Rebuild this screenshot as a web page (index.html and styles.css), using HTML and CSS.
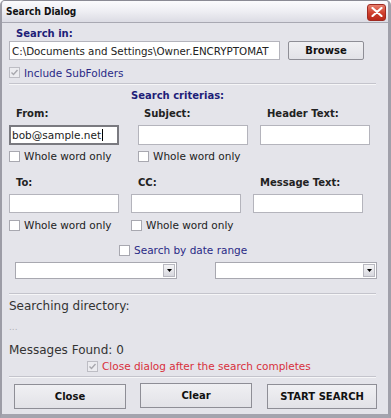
FILE: index.html
```html
<!DOCTYPE html>
<html>
<head>
<meta charset="utf-8">
<link rel="stylesheet" href="styles.css">
</head>
<body>
<div class="window">
  <div class="titlebar">
    <span class="title">Search Dialog</span>
    <span class="close-x"><svg width="12" height="10" viewBox="0 0 12 10"><path d="M1.5 1 L10.5 9 M10.5 1 L1.5 9" stroke="#fff" stroke-width="2.2" stroke-linecap="round"/></svg></span>
  </div>
  <div class="content">
    <div class="row r-searchin"><span class="navy-bold">Search in:</span></div>
    <div class="row r-path">
      <div class="input path-input">C:\Documents and Settings\Owner.ENCRYPTOMAT</div>
      <div class="btn browse">Browse</div>
    </div>
    <div class="row r-include">
      <span class="cb checked disabled"><svg width="9" height="9" viewBox="0 0 9 9"><path d="M1.5 4.5 L3.5 6.5 L7.5 2" stroke="#a8a8ae" stroke-width="1.4" fill="none"/></svg></span>
      <span class="navy">Include SubFolders</span>
    </div>
    <div class="sep s1"></div>
    <div class="row r-criteria"><span class="navy-bold">Search criterias:</span></div>
    <div class="row r-labels1">
      <span class="lbl l-from">From:</span>
      <span class="lbl l-subject">Subject:</span>
      <span class="lbl l-header">Header Text:</span>
    </div>
    <div class="row r-inputs1">
      <div class="input field focused">bob@sample.net<span class="caret"></span></div>
      <div class="input field i-subject"></div>
      <div class="input field i-header"></div>
    </div>
    <div class="row r-ww1">
      <span class="opt"><span class="cb"></span><span class="txt">Whole word only</span></span>
      <span class="opt o-subject"><span class="cb"></span><span class="txt">Whole word only</span></span>
    </div>
    <div class="row r-labels2">
      <span class="lbl l-to">To:</span>
      <span class="lbl l-cc">CC:</span>
      <span class="lbl l-msg">Message Text:</span>
    </div>
    <div class="row r-inputs2">
      <div class="input field"></div>
      <div class="input field i-cc"></div>
      <div class="input field i-msg"></div>
    </div>
    <div class="row r-ww2">
      <span class="opt"><span class="cb"></span><span class="txt">Whole word only</span></span>
      <span class="opt o-cc"><span class="cb"></span><span class="txt">Whole word only</span></span>
    </div>
    <div class="row r-date">
      <span class="cb"></span><span class="navy">Search by date range</span>
    </div>
    <div class="row r-drops">
      <div class="select"><span class="arrow"><svg width="5" height="3" viewBox="0 0 5 3"><path d="M0 0 H5 L2.5 3 Z" fill="#000"/></svg></span></div>
      <div class="select s-right"><span class="arrow"><svg width="5" height="3" viewBox="0 0 5 3"><path d="M0 0 H5 L2.5 3 Z" fill="#000"/></svg></span></div>
    </div>
    <div class="sep s2"></div>
    <div class="row r-dir">Searching directory:</div>
    <div class="row r-dots">...</div>
    <div class="row r-found">Messages Found: 0</div>
    <div class="row r-closeopt">
      <span class="cb checked disabled"><svg width="9" height="9" viewBox="0 0 9 9"><path d="M1.5 4.5 L3.5 6.5 L7.5 2" stroke="#a8a8ae" stroke-width="1.4" fill="none"/></svg></span>
      <span class="red">Close dialog after the search completes</span>
    </div>
    <div class="sep s3"></div>
    <div class="row r-buttons">
      <div class="btn big b-close">Close</div>
      <div class="btn big b-clear">Clear</div>
      <div class="btn big b-start">START SEARCH</div>
    </div>
  </div>
</div>
</body>
</html>
```

FILE: styles.css
```css
* { box-sizing: border-box; }
html, body { margin: 0; padding: 0; background: #ffffff; }
body { font-family: "DejaVu Sans", Verdana, sans-serif; font-size: 10.5px; color: #222; }

.window {
  width: 391px;
  height: 418px;
  background: #e4e4ea;
  border: 1px solid #8a8a94;
  border-bottom: 4px solid #a4a4ae;
  border-left: 2px solid #9c9ca6;
  border-right: 3px solid #a0a0aa;
  border-radius: 5px 5px 0 0;
  overflow: hidden;
}

.titlebar {
  height: 22px;
  display: flex;
  align-items: center;
  justify-content: space-between;
  padding: 0 2px 0 4px;
  background: linear-gradient(#fbfbfd, #eeeef3 50%, #dcdce4);
  border-bottom: 1px solid #a8a8b2;
}
.title {
  font-family: "DejaVu Sans Condensed", "DejaVu Sans", sans-serif;
  font-weight: bold;
  font-size: 10px;
  color: #111;
}
.close-x {
  width: 19px;
  height: 17px;
  margin-top: 1px;
  border-radius: 3px;
  background: linear-gradient(#e8806e, #cf3e2c 55%, #b8281a);
  border: 1px solid #a02a22;
  display: flex;
  align-items: center;
  justify-content: center;
}

.content { padding-left: 7px; }
.row { display: flex; align-items: center; }

.navy-bold { color: #1e1e78; font-weight: bold; font-size: 10px; }
.navy { color: #2a2a86; }
.red { color: #d8303c; }
.lbl { font-weight: bold; font-size: 10px; color: #222; }

.r-searchin { margin-top: 4px; height: 12px; padding-left: 7px; }
.r-path { margin-top: 2px; height: 19px; }
.input {
  background: #fff;
  border: 1px solid #b4b4bc;
  height: 100%;
  display: flex;
  align-items: center;
  padding-left: 2px;
  color: #222;
  white-space: nowrap;
  overflow: hidden;
}
.path-input { width: 271px; font-size: 10.3px; }
.btn {
  display: flex;
  align-items: center;
  justify-content: center;
  background: linear-gradient(#f0f0f3, #e2e2e7);
  border: 1px solid #8e8e96;
  font-weight: bold;
  color: #111;
}
.browse { margin-left: 8px; width: 76px; height: 19px; border-radius: 2px; font-size: 10px; }

.cb {
  width: 11px;
  height: 11px;
  background: #fff;
  border: 1px solid #a8a8b0;
  flex: none;
  display: inline-flex;
  align-items: center;
  justify-content: center;
}
.cb.disabled { background: #ececf0; border-color: #bdbdc4; }

.r-include { margin-top: 6px; height: 13px; }
.r-include .cb { margin-right: 4px; }

.sep {
  height: 2px;
  width: 367px;
  border-top: 1px solid #c4c4cc;
  border-bottom: 1px solid #f6f6f8;
}
.s1 { margin-top: 4px; }
.r-criteria { margin-top: 4px; height: 12px; padding-left: 122px; }

.r-labels1 { margin-top: 6px; height: 12px; }
.l-from { margin-left: 7px; width: 128px; }
.l-subject { width: 123px; }

.r-inputs1 { margin-top: 6px; height: 20px; }
.field { width: 110px; }
.i-subject { margin-left: 19px; }
.i-header { margin-left: 12px; }
.focused { border: 2px solid #7a7a80; padding-left: 1px; }
.caret { display: inline-block; width: 1px; height: 12px; background: #000; margin-left: 1px; }

.opt { display: flex; align-items: center; }
.opt .cb { margin-right: 4px; }
.r-ww1 { margin-top: 5px; height: 12px; }
.r-ww1 .opt { width: 129px; }

.r-labels2 { margin-top: 14px; height: 12px; }
.l-to { margin-left: 7px; width: 122px; }
.l-cc { width: 122px; }

.r-inputs2 { margin-top: 6px; height: 19px; }
.i-cc { margin-left: 12px; }
.i-msg { margin-left: 12px; }

.r-ww2 { margin-top: 6px; height: 12px; }
.r-ww2 .opt { width: 122px; }

.r-date { margin-top: 13px; height: 12px; padding-left: 110px; }
.r-date .cb { margin-right: 4px; }

.r-drops { margin-top: 6px; height: 17px; padding-left: 6px; }
.select {
  width: 162px;
  height: 17px;
  background: #fff;
  border: 1px solid #a8a8b0;
  display: flex;
  justify-content: flex-end;
  padding: 1px;
}
.s-right { margin-left: 38px; }
.arrow {
  width: 12px;
  height: 13px;
  background: linear-gradient(#f4f4f6, #d8d8de);
  border: 1px solid #b8b8c0;
  display: flex;
  align-items: center;
  justify-content: center;
}

.s2 { margin-top: 14px; }
.r-dir { margin-top: 4px; height: 14px; font-size: 12px; color: #333; }
.r-dots { margin-top: 7px; height: 14px; color: #b0b0b6; font-size: 9px; }
.r-found { margin-top: 9px; height: 14px; font-size: 12px; color: #333; }
.r-closeopt { margin-top: 3px; height: 12px; padding-left: 78px; }
.r-closeopt .cb { margin-right: 4px; }

.s3 { margin-top: 4px; }
.r-buttons { margin-top: 5px; height: 26px; align-items: flex-start; }
.big { height: 25px; font-size: 10px; }
.b-close { margin-left: 5px; width: 112px; margin-top: 1px; }
.b-clear { margin-left: 14px; width: 112px; }
.b-start { margin-left: 15px; width: 110px; margin-top: 1px; }
```
